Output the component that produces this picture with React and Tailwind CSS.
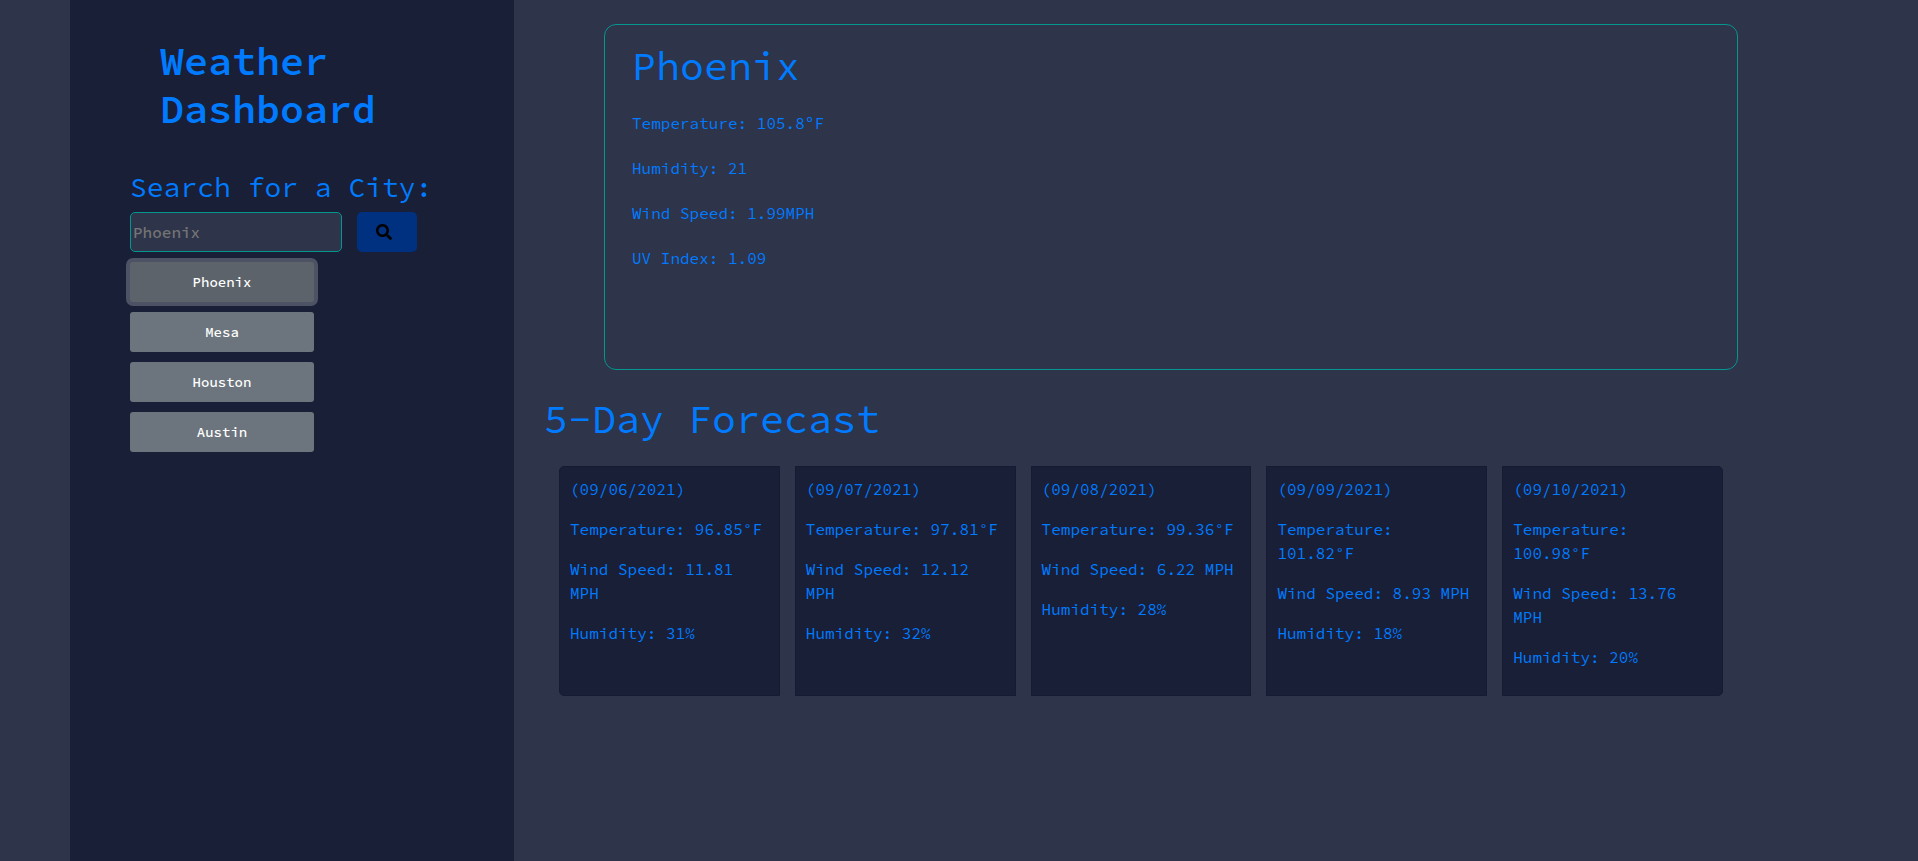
import { FaSearch } from "react-icons/fa";

const cities = ["Phoenix", "Mesa", "Houston", "Austin"];

const current = ["Temperature: 105.8ºF", "Humidity: 21", "Wind Speed: 1.99MPH", "UV Index: 1.09"];

const forecast = [
  { date: "09/06/2021", temp: "96.85", wind: "11.81", humidity: "31" },
  { date: "09/07/2021", temp: "97.81", wind: "12.12", humidity: "32" },
  { date: "09/08/2021", temp: "99.36", wind: "6.22", humidity: "28" },
  { date: "09/09/2021", temp: "101.82", wind: "8.93", humidity: "18" },
  { date: "09/10/2021", temp: "100.98", wind: "13.76", humidity: "20" },
];

function Sidebar({ selected }) {
  return (
    <aside className="w-[444px] shrink-0 bg-[#191f36] px-[60px] pt-[37px]">
      <h1 className="px-[30px] text-[40px] leading-[48px] font-semibold">Weather Dashboard</h1>
      <form className="mt-[37px]" onSubmit={(e) => e.preventDefault()}>
        <label htmlFor="city" className="block text-[28px] leading-[34px] whitespace-nowrap">
          Search for a City:
        </label>
        <div className="mt-2 flex gap-[15px]">
          <input
            id="city"
            type="text"
            placeholder="Phoenix"
            className="h-10 w-[212px] rounded-[5px] border border-[#04968f] bg-[#2e344a] px-0.5 font-medium placeholder:text-[#757575]"
          />
          <button
            type="submit"
            aria-label="Search"
            className="h-10 w-[60px] rounded-[5px] bg-[#003180] pl-[19px] text-black"
          >
            <FaSearch size={16} />
          </button>
        </div>
      </form>
      <ul className="mt-2.5 flex w-[184px] flex-col gap-2.5">
        {cities.map((city) => (
          <li key={city} className="flex">
            <button
              type="button"
              className={
                city === selected
                  ? "h-10 w-full rounded-[3px] bg-[#5c636a] text-sm font-medium text-white ring-4 ring-[#4d5265]"
                  : "h-10 w-full rounded-[3px] bg-[#6c757d] text-sm font-medium text-white"
              }
            >
              {city}
            </button>
          </li>
        ))}
      </ul>
    </aside>
  );
}

function DayCard({ day }) {
  return (
    <li className="flex flex-1 flex-col gap-4 border border-[#171b31] bg-[#191f36] p-2.5 first:rounded-l-[5px] last:rounded-r-[5px]">
      <h3>({day.date})</h3>
      <p>Temperature: {day.temp}°F</p>
      <p>Wind Speed: {day.wind} MPH</p>
      <p>Humidity: {day.humidity}%</p>
    </li>
  );
}

export default function App() {
  return (
    <div className="flex min-h-screen bg-[#2e344a] pl-[70px] font-['Source_Code_Pro','Liberation_Mono',monospace] text-base text-[#007bff]">
      <Sidebar selected="Phoenix" />
      <main className="min-w-0 flex-1 pt-6 pr-[180px] pl-[30px]">
        <section className="ml-[60px] min-h-[346px] rounded-xl border border-[#04968f] px-[27px] pt-[17px]">
          <h2 className="text-[40px] leading-[48px]">Phoenix</h2>
          <div className="mt-[21px] flex flex-col gap-[21px]">
            {current.map((line) => (
              <p key={line}>{line}</p>
            ))}
          </div>
        </section>
        <section className="mt-[25px]">
          <h2 className="text-[40px] leading-[48px]">5-Day Forecast</h2>
          <ul className="mt-[23px] flex min-h-[230px] gap-[15px] px-[15px]">
            {forecast.map((day) => (
              <DayCard key={day.date} day={day} />
            ))}
          </ul>
        </section>
      </main>
    </div>
  );
}
